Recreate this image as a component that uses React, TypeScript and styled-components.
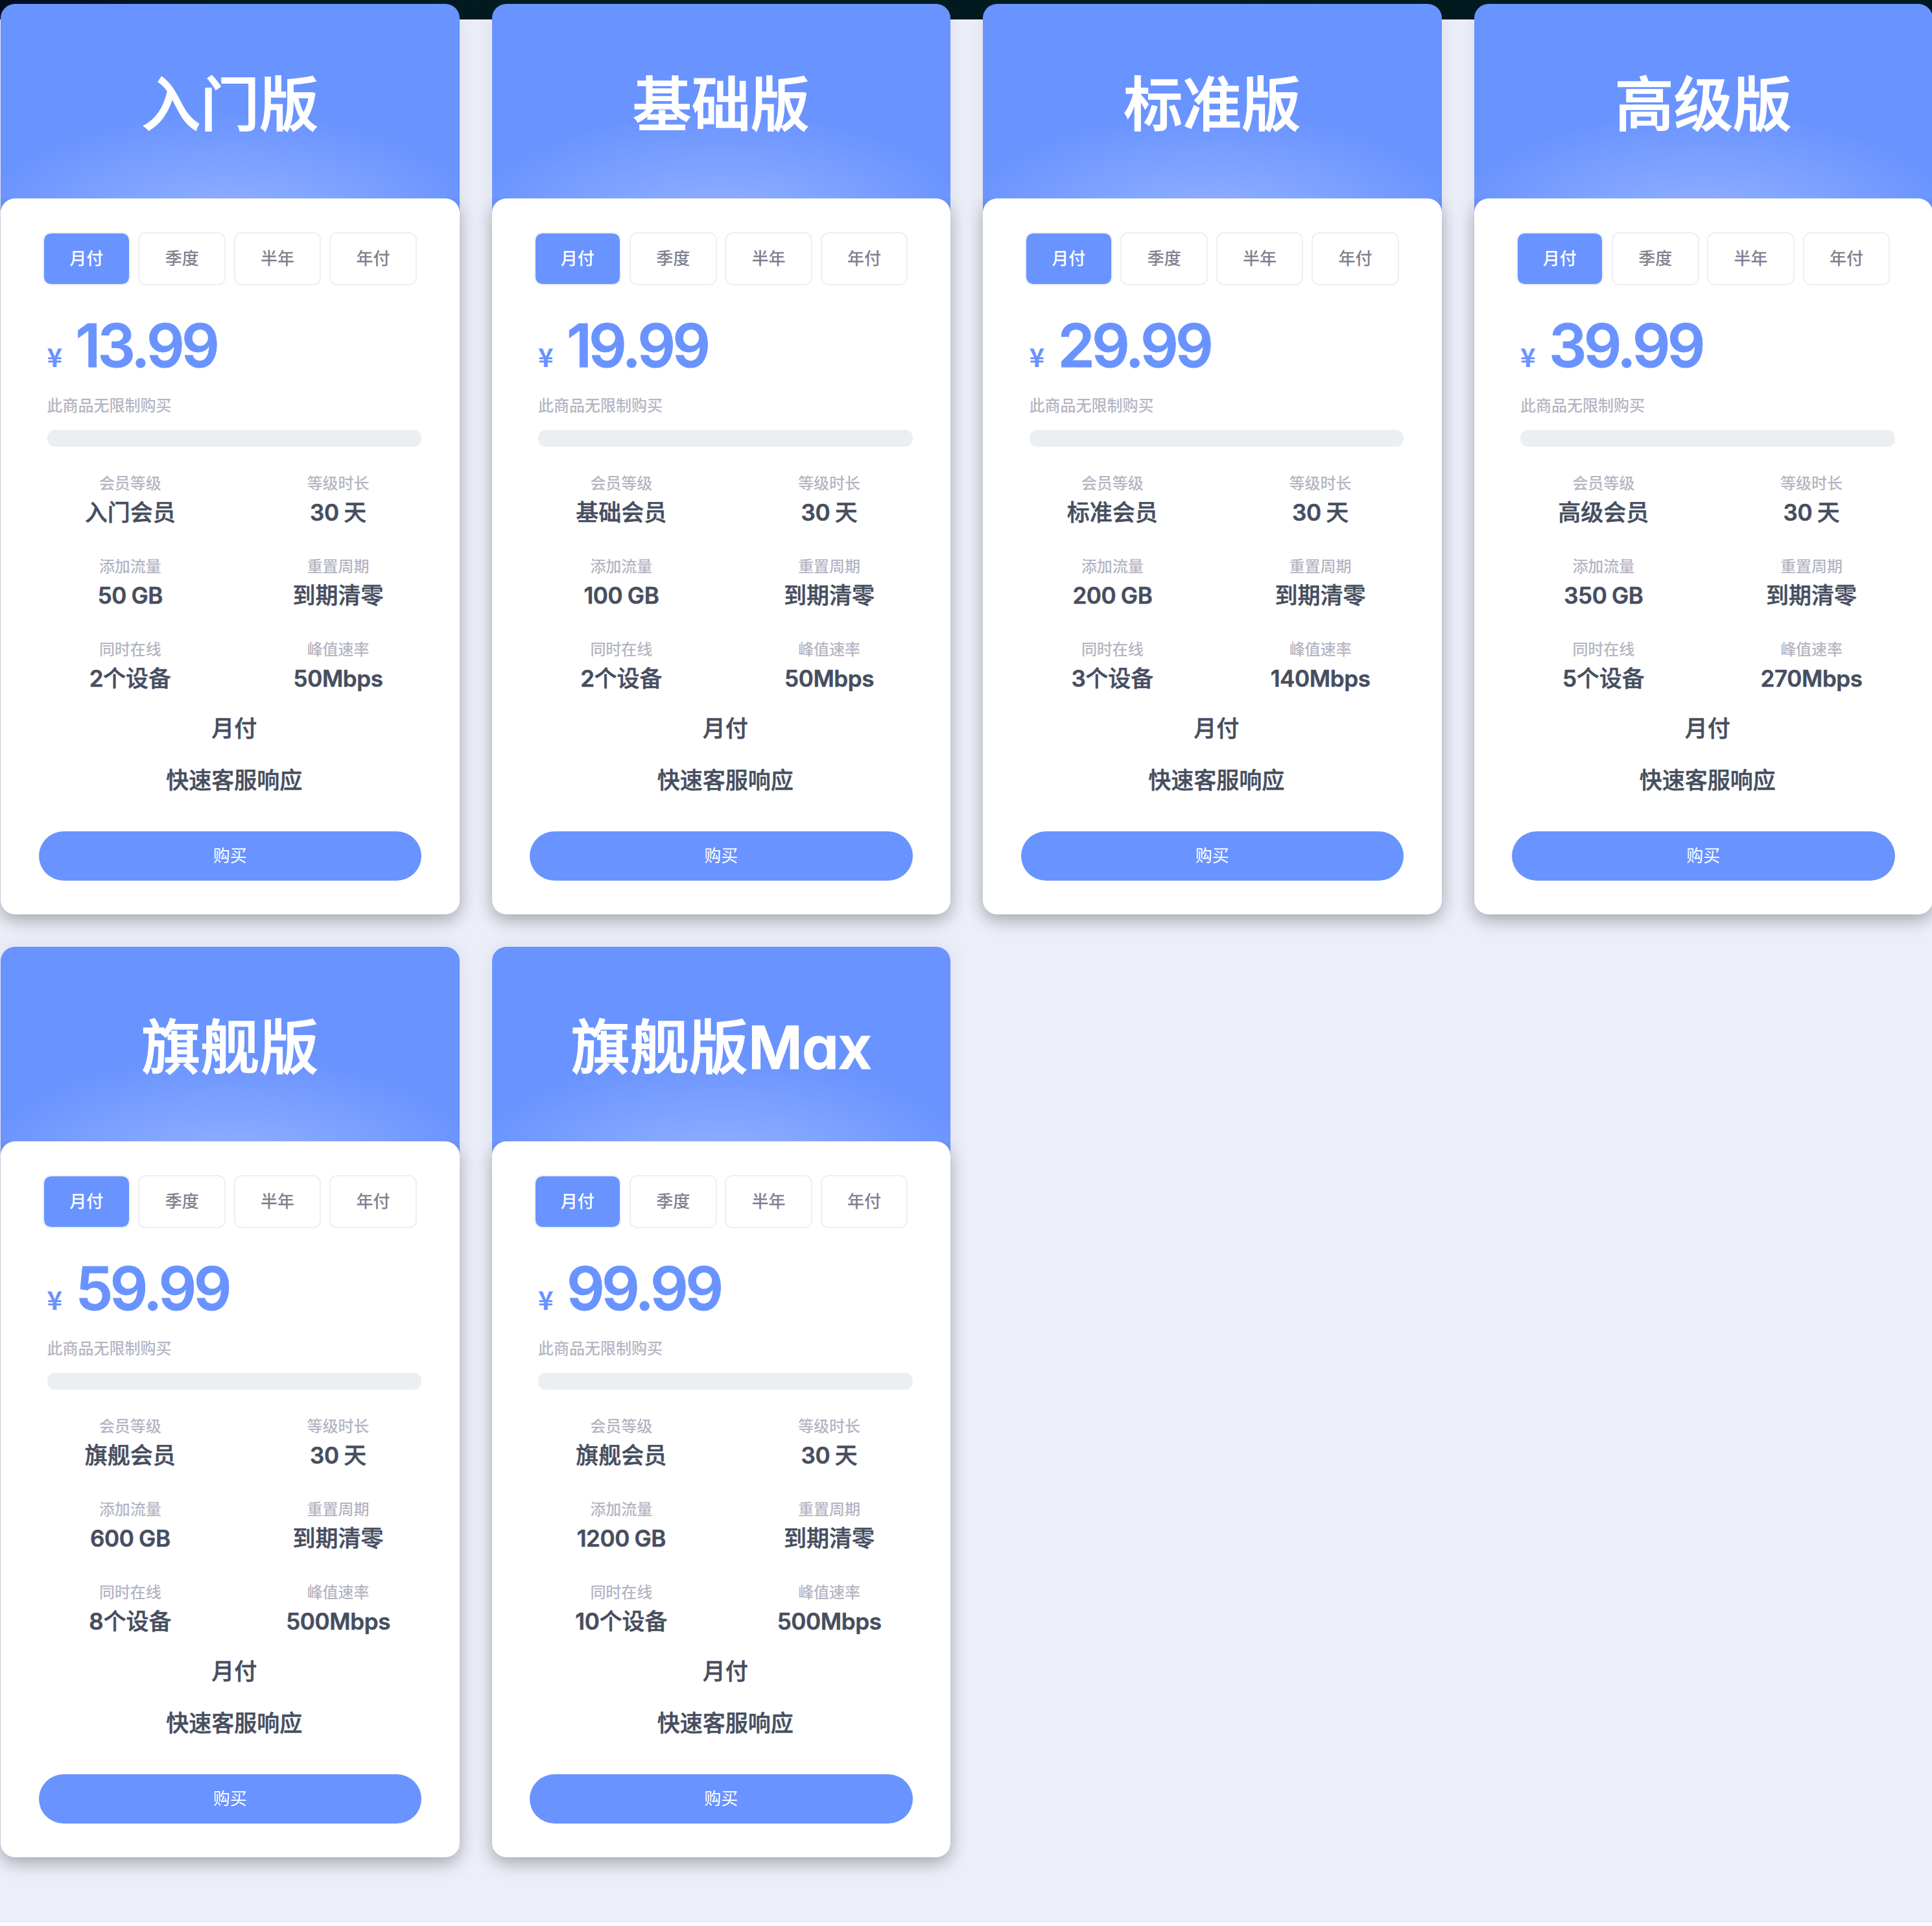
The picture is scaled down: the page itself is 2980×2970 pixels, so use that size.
import React from 'react'
import styled, { createGlobalStyle } from 'styled-components'

interface Plan {
  name: string
  price: string
  level: string
  traffic: string
  devices: string
  speed: string
}

const plans: Plan[] = [
  { name: '入门版', price: '13.99', level: '入门会员', traffic: '50 GB', devices: '2个设备', speed: '50Mbps' },
  { name: '基础版', price: '19.99', level: '基础会员', traffic: '100 GB', devices: '2个设备', speed: '50Mbps' },
  { name: '标准版', price: '29.99', level: '标准会员', traffic: '200 GB', devices: '3个设备', speed: '140Mbps' },
  { name: '高级版', price: '39.99', level: '高级会员', traffic: '350 GB', devices: '5个设备', speed: '270Mbps' },
  { name: '旗舰版', price: '59.99', level: '旗舰会员', traffic: '600 GB', devices: '8个设备', speed: '500Mbps' },
  { name: '旗舰版Max', price: '99.99', level: '旗舰会员', traffic: '1200 GB', devices: '10个设备', speed: '500Mbps' },
]

const periods = ['月付', '季度', '半年', '年付']

const App = () => (
  <>
    <GlobalStyle />
    <Page>
      <PlanGrid>
        {plans.map((plan) => (
          <PlanCard key={plan.name} plan={plan} />
        ))}
      </PlanGrid>
    </Page>
  </>
)

// Latin runs are one step bolder than the Chinese text around them
const mixed = (text: string) =>
  text
    .split(/([\x20-\x7e]+)/)
    .filter(Boolean)
    .map((part, i) => (/^[\x20-\x7e]/.test(part) ? <Latin key={i}>{part}</Latin> : part))

const PlanCard = ({ plan }: { plan: Plan }) => {
  const features = [
    { label: '会员等级', value: plan.level },
    { label: '等级时长', value: '30 天' },
    { label: '添加流量', value: plan.traffic },
    { label: '重置周期', value: '到期清零' },
    { label: '同时在线', value: plan.devices },
    { label: '峰值速率', value: plan.speed },
  ]

  return (
    <Card>
      <CardHeader>
        <Title>{mixed(plan.name)}</Title>
      </CardHeader>
      <CardBody>
        <Tabs>
          {periods.map((period, i) => (
            <Tab key={period} $active={i === 0}>{period}</Tab>
          ))}
        </Tabs>
        <Price>
          <Currency>¥</Currency>
          <Amount>{plan.price}</Amount>
        </Price>
        <Note>此商品无限制购买</Note>
        <Progress />
        <Features>
          {features.map((item) => (
            <Feature key={item.label}>
              <FeatureLabel>{item.label}</FeatureLabel>
              <FeatureValue>{mixed(item.value)}</FeatureValue>
            </Feature>
          ))}
        </Features>
        <Extras>
          <FeatureValue>月付</FeatureValue>
          <FeatureValue>快速客服响应</FeatureValue>
        </Extras>
        <BuyButton>购买</BuyButton>
      </CardBody>
    </Card>
  )
}

const GlobalStyle = createGlobalStyle`
  * {
    box-sizing: border-box;
  }

  body {
    margin: 0;
    background: #ffffff;
    font-family: Inter, "Noto Sans CJK SC", sans-serif;
  }
`

const Page = styled.div`
  height: 2965px;
  padding: 6px 0 0 1px;
  overflow: hidden;
  background: linear-gradient(90deg, #000c20, #00161f 10%, #001a20 25%, #00191d) 0 0 / 100% 30px no-repeat, #eceff8;
`

const PlanGrid = styled.div`
  display: grid;
  grid-template-columns: repeat(4, 707.5px);
  gap: 50px;
`

const Card = styled.div`
  border-radius: 22px;
  box-shadow: 0 0 30px rgba(82, 63, 105, 0.1);
`

const CardHeader = styled.div`
  height: 324px;
  padding-top: 95px;
  border-radius: 22px 22px 0 0;
  background: radial-gradient(ellipse 400px 185px at 50% 350px, rgba(255, 255, 255, 0.3), rgba(255, 255, 255, 0)), #6993ff;
`

const Title = styled.h1`
  margin: 0;
  color: #ffffff;
  font-size: 91px;
  font-weight: 500;
  line-height: 120px;
  text-align: center;
  font-feature-settings: "cv11";
  -webkit-text-stroke: 1.5px currentColor;
`

const Latin = styled.span`
  font-weight: 600;
  letter-spacing: -0.01em;
  word-spacing: -1px;
`

const CardBody = styled.div`
  height: 1104px;
  margin-top: -24px;
  padding: 52px 58.5px;
  border-radius: 22px;
  background: #ffffff;
  box-shadow: 0 10px 26px rgba(0, 0, 0, 0.25);
  clip-path: inset(0 -50px -50px -50px);
`

const Tabs = styled.div`
  display: flex;
  gap: 12.7px;
  padding-left: 6.5px;
`

const Tab = styled.div<{ $active: boolean }>`
  width: 134.7px;
  height: 82px;
  border: 2px solid #ecf0f3;
  border-radius: 12px;
  background: ${({ $active }) => ($active ? '#6993ff' : '#ffffff')};
  background-clip: padding-box;
  color: ${({ $active }) => ($active ? '#ffffff' : '#80808f')};
  font-size: 26px;
  font-weight: 500;
  line-height: 77px;
  text-align: center;
`

const Price = styled.div`
  display: flex;
  align-items: baseline;
  height: 110px;
  margin: 38px 0 20px 13px;
  color: #6993ff;
  font-weight: 600;
  line-height: 110px;
`

const Currency = styled.span`
  width: 44px;
  font-family: "Noto Sans CJK SC", sans-serif;
  font-size: 40px;
`

const Amount = styled.span`
  font-size: 92px;
  letter-spacing: -4.8px;
  -webkit-text-stroke: 0.8px currentColor;
`

const Note = styled.div`
  margin-left: 13px;
  color: #b5b5c3;
  font-size: 24px;
  font-weight: 500;
  line-height: 36px;
`

const Progress = styled.div`
  height: 26px;
  margin: 19px 0 38px 13px;
  border-radius: 12px;
  background: #ebeff2;
`

const Features = styled.div`
  display: grid;
  grid-template-columns: 1fr 1fr;
  row-gap: 40px;
  margin: 0 -32px 0 -19px;
`

const Feature = styled.div`
  text-align: center;
`

const FeatureLabel = styled.div`
  margin-bottom: 1px;
  color: #b5b5c3;
  font-size: 24px;
  font-weight: 500;
  line-height: 37px;
`

const FeatureValue = styled.div`
  color: #464e5f;
  font-size: 35px;
  font-weight: 500;
  line-height: 50px;
  text-align: center;
  -webkit-text-stroke: 0.5px currentColor;
`

const Extras = styled.div`
  display: flex;
  flex-direction: column;
  gap: 30px;
  margin: 27px 0 54px 13px;
`

const BuyButton = styled.button`
  display: block;
  width: 100%;
  height: 76px;
  padding: 0;
  border: 0;
  border-radius: 38px;
  background: #6993ff;
  color: #ffffff;
  font-family: inherit;
  font-size: 26px;
  line-height: 76px;
`

export default App
